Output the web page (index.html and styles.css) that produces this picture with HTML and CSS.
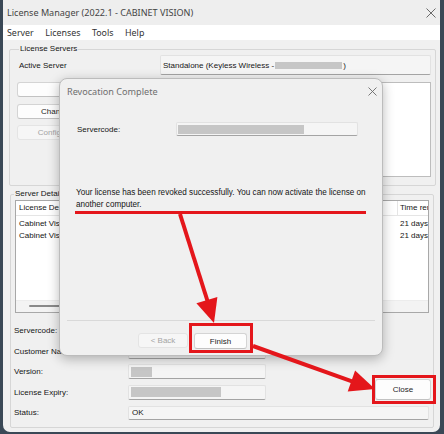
FILE: index.html
```html
<!DOCTYPE html>
<html>
<head>
<meta charset="utf-8">
<title>License Manager</title>
<link rel="stylesheet" href="styles.css">
</head>
<body>
<div class="window">
  <div class="titlebar">
    <span class="title">License Manager (2022.1 - CABINET VISION)</span>
    <svg class="xicon" width="10" height="10" viewBox="0 0 10 10"><path d="M0.5 0.5 L9.5 9.5 M9.5 0.5 L0.5 9.5" stroke="#5a5a5a" stroke-width="0.9" fill="none"/></svg>
  </div>
  <div class="menubar"><span>Server</span><span>Licenses</span><span>Tools</span><span>Help</span></div>
  <div class="content">
    <div class="group servers">
      <div class="group-title">License Servers</div>
      <div class="active-row">
        <span class="lbl active-lbl">Active Server</span>
        <div class="field active-field">Standalone (Keyless Wireless - <span class="redact r-server"></span>)</div>
      </div>
      <div class="servers-body">
        <div class="btncol">
          <div class="btn">Add</div>
          <div class="btn">Change Server</div>
          <div class="btn disabled">Configure Server</div>
        </div>
        <div class="listbox"></div>
      </div>
    </div>
    <div class="group details">
      <div class="group-title">Server Details</div>
      <div class="listview">
        <div class="lv-head">
          <div class="col c1">License Description</div>
          <div class="col c2">Product</div>
          <div class="col c3">Version</div>
          <div class="col c4">Type</div>
          <div class="col c5">Time remaining</div>
        </div>
        <div class="lv-body">
          <div class="lv-row"><div class="col c1">Cabinet Vision Solid</div><div class="col c2">Solid</div><div class="col c3">2022.1</div><div class="col c4">Rental</div><div class="col c5">21 days</div></div>
          <div class="lv-row"><div class="col c1">Cabinet Vision S2M</div><div class="col c2">S2M</div><div class="col c3">2022.1</div><div class="col c4">Rental</div><div class="col c5">21 days</div></div>
        </div>
        <div class="hscroll"><div class="thumb"></div></div>
      </div>
      <div class="form">
        <span class="lbl">Servercode:</span><div class="field f-short"></div>
        <span class="lbl">Customer Name:</span><div class="field f-short"></div>
        <span class="lbl">Version:</span><div class="field f-short"><span class="redact r-ver"></span></div>
        <span class="lbl">License Expiry:</span><div class="field f-short"><span class="redact r-exp"></span></div>
        <span class="lbl">Status:</span><div class="field f-status">OK</div>
        <div class="btn close-btn">Close</div>
      </div>
    </div>
  </div>

  <div class="dialog">
    <div class="dlg-title">
      <span>Revocation Complete</span>
      <svg class="xicon" width="9" height="9" viewBox="0 0 9 9"><path d="M0.5 0.5 L8.5 8.5 M8.5 0.5 L0.5 8.5" stroke="#6a6a6a" stroke-width="0.9" fill="none"/></svg>
    </div>
    <div class="dlg-row">
      <span class="dlg-lbl">Servercode:</span>
      <div class="field dlg-field"><span class="redact r-code"></span></div>
    </div>
    <div class="dlg-msg">Your license has been revoked successfully. You can now activate the license on<br>another computer.</div>
    <div class="dlg-sep"></div>
    <div class="dlg-buttons">
      <div class="btn disabled back">&lt; Back</div>
      <div class="btn finish">Finish</div>
    </div>
  </div>
</div>

<svg class="annot" width="444" height="434" viewBox="0 0 444 434">
  <rect x="75" y="211" width="291" height="3" fill="#e4161b"/>
  <line x1="180" y1="214" x2="207.5" y2="301" stroke="#e4161b" stroke-width="4"/>
  <polygon points="214,323 196.4,303.3 217.4,296.9" fill="#e4161b"/>
  <rect x="190.5" y="324.5" width="61" height="27" fill="none" stroke="#e4161b" stroke-width="3"/>
  <line x1="253" y1="346" x2="352" y2="381.3" stroke="#e4161b" stroke-width="4"/>
  <polygon points="375,389 347.7,391.4 355.1,370.6" fill="#e4161b"/>
  <rect x="373.5" y="376.5" width="61" height="26" fill="none" stroke="#e4161b" stroke-width="3"/>
</svg>
</body>
</html>
```

FILE: styles.css
```css
* { box-sizing: border-box; }
html, body { margin: 0; padding: 0; }
body {
  width: 444px;
  height: 434px;
  background: #3a4856;
  position: relative;
  overflow: hidden;
  font-family: "Liberation Sans", Arial, sans-serif;
  font-size: 8px;
  color: #151515;
}

.window {
  position: relative;
  margin-left: 3px;
  width: 437px;
  height: 432px;
  background: #f0f0f0;
  border-radius: 0 0 7px 7px;
  overflow: hidden;
}

.titlebar {
  height: 25px;
  display: flex;
  align-items: center;
  justify-content: space-between;
  padding: 0 4px 0 4px;
  background: #eeeeee;
  font-family: "Noto Sans", sans-serif;
  font-size: 9.05px;
  color: #444;
}
.xicon { display: block; }

.menubar {
  height: 15px;
  background: #ffffff;
  display: flex;
  align-items: center;
  gap: 11.5px;
  padding-left: 4px;
  font-family: "Noto Sans", sans-serif;
  font-size: 8.9px;
  color: #333;
}

.content { padding: 9px 4px 0 6px; }

.group {
  border: 1px solid #d6d6d6;
  border-radius: 2px;
}
.group-title {
  width: max-content;
  margin: -6px 0 0 2px;
  padding: 0 1px;
  height: 10px;
  line-height: 10px;
  background: #f0f0f0;
}

.servers { padding: 0 4px 8px 7px; }
.active-row {
  margin-top: 1px;
  height: 20px;
  display: flex;
  align-items: center;
}
.lbl { padding-left: 2px; white-space: nowrap; }
.active-lbl { width: 143px; }

.field {
  background: #f5f5f5;
  border: 1px solid #e2e2e2;
  border-bottom: 1px solid #a4a4a4;
  border-radius: 2px;
  display: flex;
  align-items: center;
  white-space: nowrap;
  overflow: hidden;
}
.active-field { width: 271px; height: 20px; padding-left: 2px; }
.redact { display: inline-block; background: #c6c6c6; }
.r-server { width: 67px; height: 7px; margin-left: 1px; margin-right: 1px; }

.servers-body { display: flex; margin-top: 7px; }
.btncol { width: 102px; display: flex; flex-direction: column; gap: 6.5px; }
.btn {
  height: 15px;
  background: #fdfdfd;
  border: 1px solid #d4d4d4;
  border-bottom-color: #c2c2c2;
  border-radius: 3px;
  display: flex;
  align-items: center;
  justify-content: center;
  white-space: nowrap;
  color: #1e1e1e;
}
.btn.disabled {
  background: #f6f6f6;
  border-color: #e4e4e4;
  color: #a4a4a4;
}
.listbox {
  flex: 1;
  height: 95px;
  margin-left: 6px;
  background: #ffffff;
  border: 1px solid #bdbdbd;
}

.details { margin: 8px 2px 0 1px; padding: 0 1px 4px 1px; }
.listview {
  margin: 1px 3px 0 3px;
  height: 113px;
  background: #fff;
  border: 1px solid #a8a8a8;
  display: flex;
  flex-direction: column;
  overflow: hidden;
}
.lv-head {
  height: 15px;
  display: flex;
  border-bottom: 1px solid #e5e5e5;
  flex: none;
}
.lv-head .col {
  border-right: 1px solid #e5e5e5;
  line-height: 14px;
}
.col { padding-left: 3px; white-space: nowrap; overflow: hidden; flex: none; }
.c1 { width: 130px; }
.c2 { width: 80px; }
.c3 { width: 80px; }
.c4 { width: 92px; padding-left: 2px; }
.c5 { width: 60px; padding-left: 2px; }
.lv-body { flex: 1; padding-top: 2px; }
.lv-row { display: flex; height: 12px; line-height: 12px; }
.hscroll {
  flex: none;
  height: 12px;
  background: #f3f3f3;
  border-top: 1px solid #ececec;
  padding-top: 4px;
}
.thumb { margin-left: 13px; width: 220px; height: 2px; background: #8a8a8a; border-radius: 1px; }

.form {
  margin: 7.5px 1px 0 0;
  display: grid;
  grid-template-columns: 116px 138px 1fr 56px;
  grid-template-rows: repeat(5, 20.5px);
  align-items: center;
}
.form .lbl { grid-column: 1; }
.f-short { grid-column: 2; height: 15px; padding-left: 2px; }
.f-status { grid-column: 2 / 5; height: 14px; margin-right: 2px; padding-left: 3px; }
.r-ver { width: 21px; height: 10px; }
.r-exp { width: 90px; height: 10px; }
.close-btn {
  grid-column: 4;
  grid-row: 3 / 5;
  align-self: end;
  height: 21px;
  margin-bottom: 2.5px;
}

.dialog {
  position: absolute;
  left: 56px;
  top: 78px;
  width: 324px;
  height: 278px;
  background: #f0f0f0;
  border: 1px solid #bcbcbc;
  border-radius: 8px;
  box-shadow: 0 3px 12px rgba(0, 0, 0, 0.28);
}
.dlg-title {
  height: 25px;
  display: flex;
  align-items: center;
  justify-content: space-between;
  padding: 0 5px 0 7px;
  font-family: "Noto Sans", sans-serif;
  font-size: 9.1px;
  color: #6e6e6e;
}
.dlg-row { margin-top: 18px; height: 14px; display: flex; align-items: center; }
.dlg-lbl { width: 116px; padding-left: 17px; }
.dlg-field { width: 182px; height: 14px; padding-left: 1px; }
.r-code { width: 126px; height: 9px; }
.dlg-msg { margin-top: 51px; padding-left: 16px; line-height: 12px; white-space: nowrap; font-size: 8.15px; }
.dlg-sep { margin: 109px 0 0 7px; width: 308px; height: 1px; background: #d9d9d9; }
.dlg-buttons { margin-top: 12px; padding-left: 78px; display: flex; gap: 6px; align-items: flex-start; }
.back { width: 50px; }
.finish { width: 53px; height: 16px; }

.annot { position: absolute; left: 0; top: 0; pointer-events: none; }
```
